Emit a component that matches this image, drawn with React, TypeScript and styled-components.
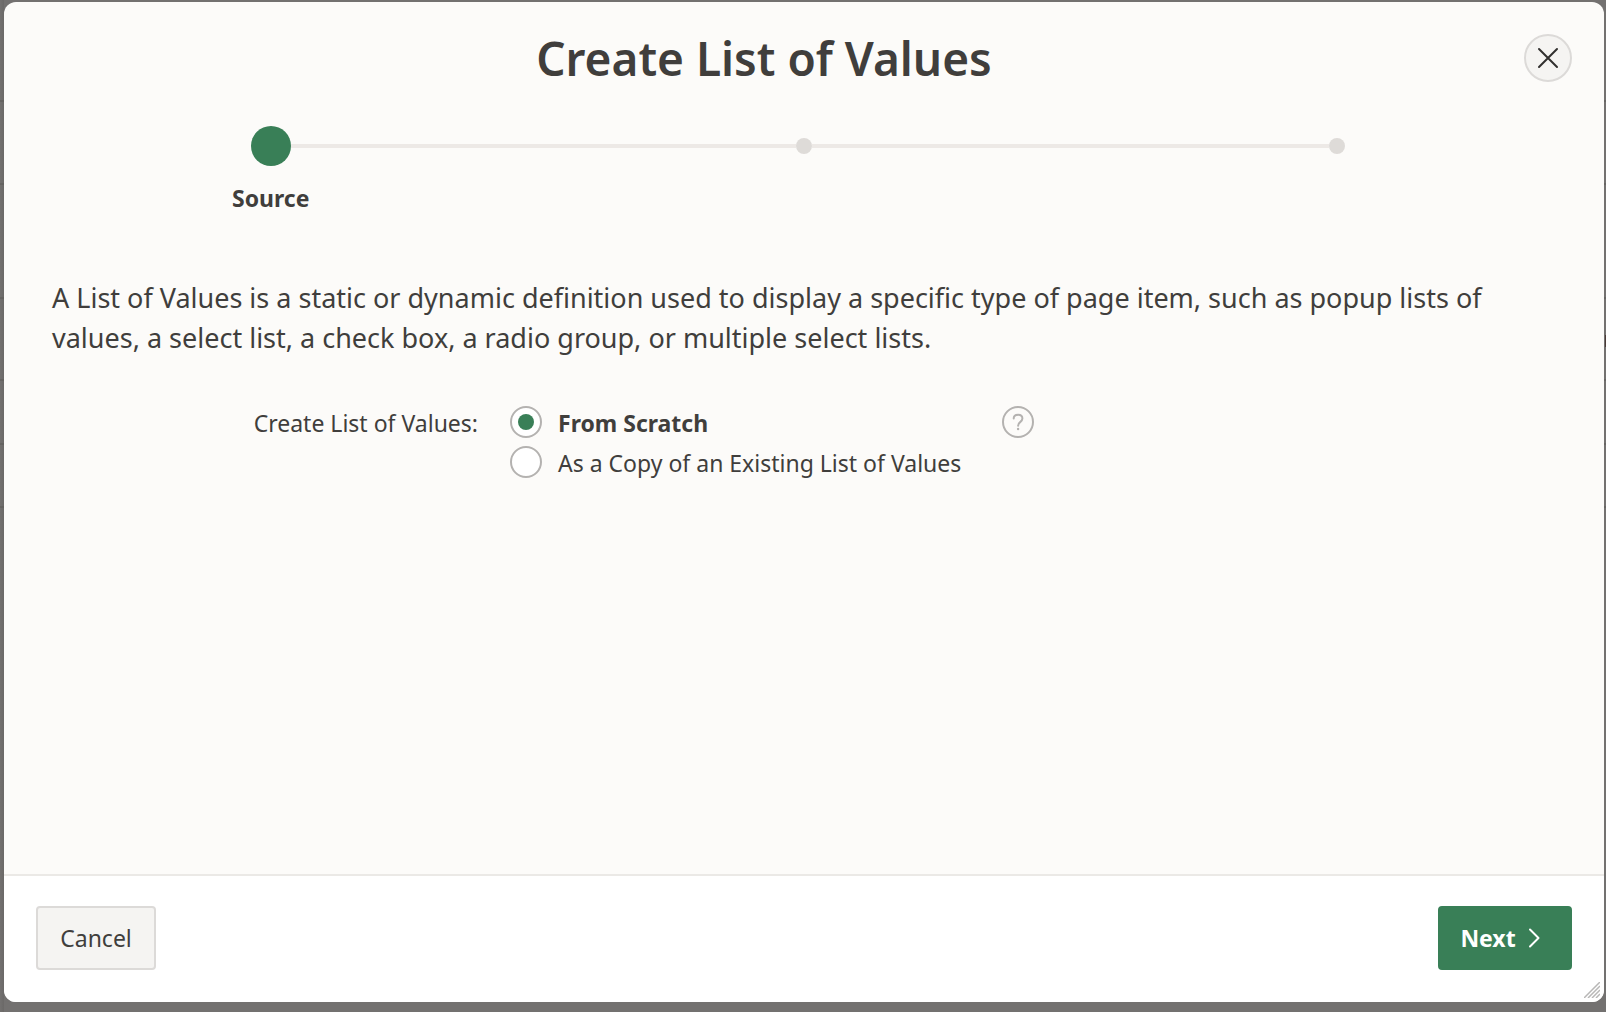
import React, { useId, useState } from "react";
import styled, { createGlobalStyle } from "styled-components";

const color = {
  text: "#403e3c",
  green: "#397f57",
  surface: "#fcfbf9",
  border: "#dcdad8",
  rule: "#ebe9e6",
  track: "#ede9e6",
  muted: "#b4b2b0",
};

const fontStack = `"Noto Sans", "Open Sans", sans-serif`;

const backdropRules = [100, 183, 297, 379, 443, 506];

const GlobalStyle = createGlobalStyle`
  *, *::before, *::after { box-sizing: border-box; }
  html, body { margin: 0; height: 100%; }
  #root { height: 100%; }
  body {
    color: ${color.text};
    font-family: ${fontStack};
  }
`;

const Backdrop = styled.div`
  display: flex;
  min-height: 100vh;
  padding: 2px 2px 10px 4px;
  background-color: #737170;
  background-image:
    linear-gradient(#4a3a36, #4a3a36),
    linear-gradient(to right, #82828000, #5e5c5a66),
    ${backdropRules.map(() => "linear-gradient(#676563, #676563)").join(", ")};
  background-repeat: no-repeat;
  background-size: 1px 12px, 4px 100%, ${backdropRules.map(() => "100% 2px").join(", ")};
  background-position: 100% 335px, 0 0, ${backdropRules.map((y) => `0 ${y}px`).join(", ")};
`;

const Dialog = styled.section`
  position: relative;
  flex: 1;
  display: flex;
  flex-direction: column;
  overflow: hidden;
  border-radius: 12px;
  background: ${color.surface};
`;

const Header = styled.header`
  display: flex;
  align-items: center;
  gap: 32px;
  padding: 24px 32px 0;
`;

const Title = styled.h1`
  flex: 1;
  margin: 0;
  font-size: 46px;
  font-weight: 600;
  line-height: 64px;
  text-align: center;
`;

const CloseButton = styled.button`
  display: grid;
  place-items: center;
  width: 48px;
  height: 48px;
  padding: 0;
  border: 2px solid ${color.border};
  border-radius: 50%;
  background: #f5f4f2;
  color: #32302f;
  cursor: pointer;
`;

const Steps = styled.ol`
  display: grid;
  grid-template-columns: repeat(3, 1fr);
  margin: 0;
  padding: 36px 0 0;
  list-style: none;
`;

const Step = styled.li`
  display: flex;
  flex-direction: column;
  align-items: center;
`;

const Rail = styled.div`
  display: flex;
  align-items: center;
  align-self: stretch;
  height: 40px;
`;

const Track = styled.span<{ $hidden?: boolean }>`
  flex: 1;
  height: 4px;
  background: ${(p) => (p.$hidden ? "transparent" : color.track)};
`;

const Marker = styled.span<{ $current?: boolean }>`
  width: ${(p) => (p.$current ? 40 : 16)}px;
  height: ${(p) => (p.$current ? 40 : 16)}px;
  border-radius: 50%;
  background: ${(p) => (p.$current ? color.green : "#dedbd8")};
`;

const StepLabel = styled.span`
  padding-top: 16px;
  font-size: 23px;
  font-weight: 700;
  line-height: 32px;
`;

const Body = styled.div`
  flex: 1;
  padding: 64px 48px 32px;
`;

const Intro = styled.p`
  margin: 0;
  font-size: 27px;
  line-height: 40px;
`;

const Field = styled.div`
  display: grid;
  grid-template-columns: 426px minmax(460px, auto) auto;
  justify-content: start;
  align-items: start;
  column-gap: 32px;
  padding-top: 48px;
  font-size: 23px;
  line-height: 32px;
`;

const FieldLabel = styled.span`
  padding-top: 1px;
  text-align: right;
`;

const Options = styled.div`
  display: flex;
  flex-direction: column;
  align-items: flex-start;
  gap: 7px;
`;

const Option = styled.label<{ $selected: boolean }>`
  display: flex;
  align-items: flex-start;
  gap: 16px;
  font-weight: ${(p) => (p.$selected ? 700 : 400)};
  cursor: pointer;
`;

const OptionText = styled.span`
  padding-top: 1px;
`;

const Radio = styled.input`
  appearance: none;
  display: grid;
  place-items: center;
  width: 32px;
  height: 32px;
  margin: 0;
  border: 2px solid ${color.muted};
  border-radius: 50%;
  background: #fff;

  &:checked::before {
    content: "";
    width: 16px;
    height: 16px;
    border-radius: 50%;
    background: ${color.green};
  }
`;

const HelpButton = styled.button`
  display: grid;
  padding: 0;
  border: 0;
  background: none;
  color: ${color.muted};
  cursor: pointer;
`;

const Footer = styled.footer`
  display: flex;
  justify-content: space-between;
  padding: 30px 32px 32px;
  border-top: 2px solid ${color.rule};
  background: #fff;
`;

const Button = styled.button<{ $primary?: boolean }>`
  display: flex;
  align-items: center;
  justify-content: center;
  gap: 12px;
  min-width: ${(p) => (p.$primary ? 134 : 120)}px;
  height: 64px;
  padding: ${(p) => (p.$primary ? "0 30px 0 20px" : "0 20px")};
  border: 2px solid ${(p) => (p.$primary ? color.green : color.border)};
  border-radius: 4px;
  background: ${(p) => (p.$primary ? color.green : "#f5f4f2")};
  color: ${(p) => (p.$primary ? "#fff" : color.text)};
  font: ${(p) => (p.$primary ? 700 : 400)} 23px/32px ${fontStack};
  cursor: pointer;
`;

const ResizeGrip = styled.svg`
  position: absolute;
  right: 4px;
  bottom: 4px;
  color: #b8b7b6;
`;

const steps = [{ label: "Source" }, { label: "" }, { label: "" }];
const choices = ["From Scratch", "As a Copy of an Existing List of Values"];

export default function App() {
  const id = useId();
  const [choice, setChoice] = useState(choices[0]);

  return (
    <>
      <GlobalStyle />
      <Backdrop>
        <Dialog role="dialog" aria-labelledby={`${id}-title`}>
          <Header>
            <Title id={`${id}-title`}>Create List of Values</Title>
            <CloseButton type="button" aria-label="Close">
              <svg width="22" height="22" viewBox="0 0 22 22" fill="none" stroke="currentColor" strokeWidth="2" strokeLinecap="round">
                <path d="M2 2 20 20M20 2 2 20" />
              </svg>
            </CloseButton>
          </Header>

          <Steps>
            {steps.map((step, i) => (
              <Step key={i} aria-current={i === 0 ? "step" : undefined}>
                <Rail>
                  <Track $hidden={i === 0} />
                  <Marker $current={i === 0} />
                  <Track $hidden={i === steps.length - 1} />
                </Rail>
                {step.label && <StepLabel>{step.label}</StepLabel>}
              </Step>
            ))}
          </Steps>

          <Body>
            <Intro>
              A List of Values is a static or dynamic definition used to display a specific type of
              page item, such as popup lists of values, a select list, a check box, a radio group,
              or multiple select lists.
            </Intro>
            <Field>
              <FieldLabel id={`${id}-field`}>Create List of Values:</FieldLabel>
              <Options role="radiogroup" aria-labelledby={`${id}-field`}>
                {choices.map((text, i) => (
                  <Option key={text} htmlFor={`${id}-${i}`} $selected={choice === text}>
                    <Radio
                      type="radio"
                      id={`${id}-${i}`}
                      name={`${id}-source`}
                      checked={choice === text}
                      onChange={() => setChoice(text)}
                    />
                    <OptionText>{text}</OptionText>
                  </Option>
                ))}
              </Options>
              <HelpButton type="button" aria-label="Help">
                <svg width="32" height="32" viewBox="0 0 32 32" fill="none" stroke="currentColor" strokeWidth="2">
                  <circle cx="16" cy="16" r="15" />
                  <path d="M11.7 12.6C11.7 10.3 13.5 8.8 16.1 8.8C18.6 8.8 20.4 10.3 20.4 12.6C20.4 16 16.1 15.8 16.1 19.8" strokeLinecap="round" />
                  <circle cx="16.1" cy="23" r="1.2" fill="currentColor" stroke="none" />
                </svg>
              </HelpButton>
            </Field>
          </Body>

          <Footer>
            <Button type="button">Cancel</Button>
            <Button type="button" $primary>
              Next
              <svg width="12" height="20" viewBox="0 0 12 20" fill="none" stroke="currentColor" strokeWidth="2" strokeLinecap="round" strokeLinejoin="round">
                <path d="M2 1.5 10.5 10 2 18.5" />
              </svg>
            </Button>
          </Footer>

          <ResizeGrip width="16" height="16" viewBox="0 0 16 16" stroke="currentColor" strokeWidth="1.5" aria-hidden="true">
            <path d="M0 16 16 0M4 16 16 4M8 16 16 8M12 16 16 12" />
          </ResizeGrip>
        </Dialog>
      </Backdrop>
    </>
  );
}
